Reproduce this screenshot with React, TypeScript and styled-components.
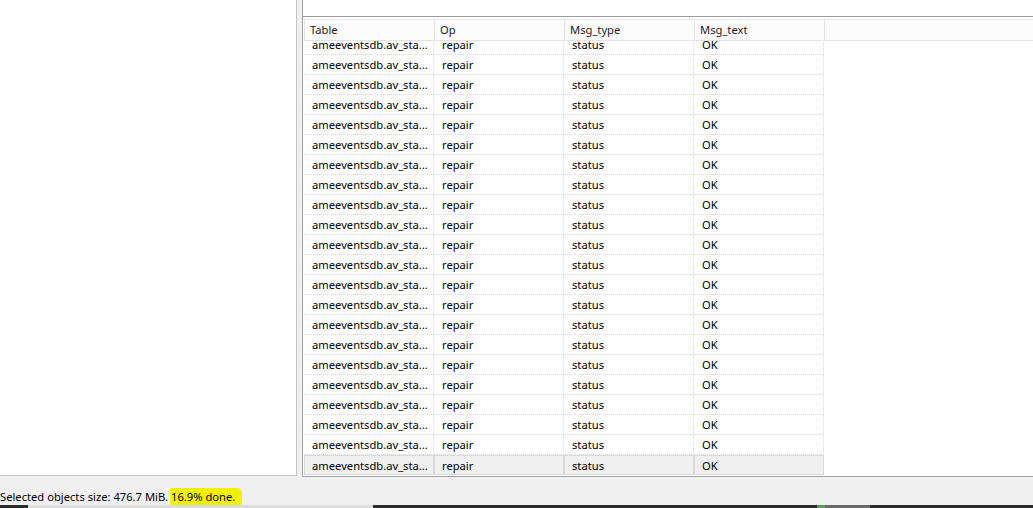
import * as React from 'react';
import styled, {createGlobalStyle} from 'styled-components';

const GlobalStyle = createGlobalStyle`
    html, body {
        margin: 0;
        padding: 0;
        background: #f0f0f0;
        overflow: hidden;
    }
    * {
        box-sizing: border-box;
    }
`;

const COLUMNS = ['Table', 'Op', 'Msg_type', 'Msg_text'];
const ROW_COUNT = 22;

const rows = Array.from({length: ROW_COUNT}, () => ['ameeventsdb.av_sta...', 'repair', 'status', 'OK']);

const taskbar = [
    {w: 28, c: '#2b2b2b'},
    {w: 345, c: '#dcdcdc'},
    {w: 444, c: '#2d2d2d'},
    {w: 8, c: '#5d9b5d'},
    {w: 45, c: '#6a6a6a'},
    {w: 163, c: '#2d2d2d'},
];

const App = () => {
    return (
        <Window>
            <GlobalStyle />
            <Main>
                <LeftPanel />
                <RightPanel>
                    <TopPane />
                    <Grid>
                        <HeaderRow>
                            {COLUMNS.map((it) => (
                                <HeaderCell key={it}>{it}</HeaderCell>
                            ))}
                            <HeaderFiller />
                        </HeaderRow>
                        <Viewport>
                            <RowList>
                                {rows.map((row, i) => (
                                    <Row key={i}>
                                        {row.map((text, j) => (
                                            <Cell key={j} selected={i === ROW_COUNT - 1}>
                                                {text}
                                            </Cell>
                                        ))}
                                    </Row>
                                ))}
                            </RowList>
                        </Viewport>
                    </Grid>
                </RightPanel>
            </Main>
            <StatusBar>
                <StatusText>
                    Selected objects size: 476.7 MiB. <Highlight>16.9% done.</Highlight>
                </StatusText>
            </StatusBar>
            <Taskbar>
                {taskbar.map((it, i) => (
                    <TaskSegment key={i} color={it.c} style={{width: it.w}} />
                ))}
            </Taskbar>
        </Window>
    );
};

const Window = styled.div`
    width: 1033px;
    height: 508px;
    display: flex;
    flex-direction: column;
    font-family: 'Noto Sans', 'Open Sans', sans-serif;
    font-size: 11.2px;
    color: #000;
    background: #f0f0f0;
`;

const Main = styled.div`
    height: 477px;
    display: flex;
    gap: 5px;
`;

const LeftPanel = styled.div`
    width: 297px;
    height: 476px;
    background: #fff;
    border-right: 1px solid #c4c4c4;
    border-bottom: 1px solid #c4c4c4;
`;

const RightPanel = styled.div`
    flex: 1;
    display: flex;
    flex-direction: column;
    border-left: 1px solid #a0a0a0;
    border-bottom: 1px solid #a0a0a0;
    background: #fff;
`;

const TopPane = styled.div`
    height: 17px;
    background: #fff;
    border-bottom: 1px solid #a0a0a0;
`;

const Grid = styled.div`
    flex: 1;
    display: flex;
    flex-direction: column;
    padding: 2px 0 0 1px;
    background: #fff;
    min-height: 0;
`;

const HeaderRow = styled.div`
    height: 22px;
    flex: none;
    display: flex;
    background: #fcfcfc;
    border-top: 1px solid #e3e3e3;
    border-bottom: 1px solid #e3e3e3;
    border-left: 1px solid #e3e3e3;
`;

const HeaderCell = styled.div`
    width: 130px;
    flex: none;
    padding: 0 5px 1px;
    display: flex;
    align-items: center;
    border-right: 1px solid #e3e3e3;
    color: #1a1a1a;
`;

const HeaderFiller = styled.div`
    flex: 1;
`;

const Viewport = styled.div`
    flex: 1;
    overflow: hidden;
`;

const RowList = styled.div`
    margin-top: -6px;
    display: flex;
    flex-direction: column;
`;

const Row = styled.div`
    height: 20px;
    display: flex;
`;

const Cell = styled.div<{selected?: boolean}>`
    width: 130px;
    flex: none;
    display: flex;
    align-items: center;
    white-space: nowrap;
    color: #000;
    background: ${(p) => (p.selected ? '#f0f0f0' : '#fff')};
    border-right: ${(p) => (p.selected ? '1px solid #d9d9d9' : '1px dotted #d8d8d8')};
    border-bottom: ${(p) => (p.selected ? '1px solid #d9d9d9' : '1px dotted #d8d8d8')};
    border-top: ${(p) => (p.selected ? '1px solid #d9d9d9' : 'none')};
    border-left: ${(p) => (p.selected ? '1px solid #d9d9d9' : 'none')};
    padding-left: ${(p) => (p.selected ? '7px' : '8px')};
`;

const StatusBar = styled.div`
    height: 28px;
    padding-top: 11px;
    display: flex;
    align-items: flex-start;
    background: #f0f0f0;
`;

const StatusText = styled.span`
    white-space: nowrap;
    color: #000;
    line-height: 14px;
`;

const Highlight = styled.span`
    display: inline-block;
    background: #f2f200;
    padding: 2px 7px 3px 1px;
    margin-left: -1px;
    border-radius: 2px 5px 3px 2px;
`;

const Taskbar = styled.div`
    height: 3px;
    display: flex;
`;

const TaskSegment = styled.div<{color: string}>`
    height: 100%;
    flex: none;
    background: ${(p) => p.color};
`;

export default App;
